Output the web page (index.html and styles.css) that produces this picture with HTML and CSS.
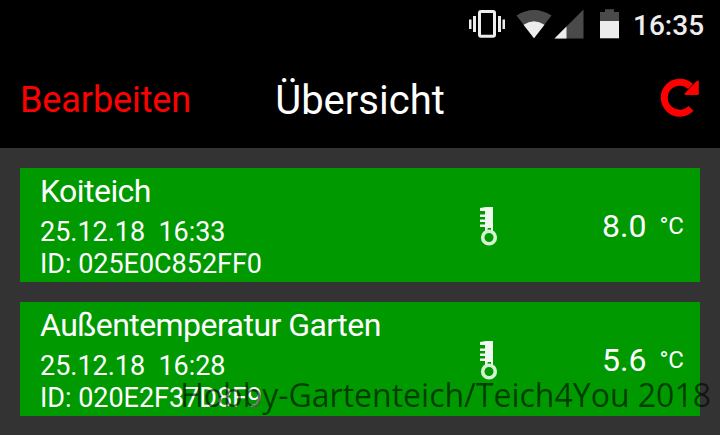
FILE: index.html
```html
<!DOCTYPE html>
<html lang="de">
<head>
    <meta charset="UTF-8">
    <meta name="viewport" content="width=device-width, initial-scale=1.0">
    <title>Übersicht</title>
    <link rel="stylesheet" href="styles.css">
</head>
<body>
    <div class="statusbar">
        <svg class="status-icons" width="160" height="48" viewBox="464 0 160 48">
            <!-- Vibration -->
            <rect x="479.5" y="11.5" width="15" height="24.8" rx="1.5" fill="none" stroke="#ededed" stroke-width="3"/>
            <path fill="#ededed" d="M469 19.500h2.500v9.500H469zM473 16h3v16h-3zM498 16h3v16h-3zM502.500 19.500h2.500v9.500h-2.500z"/>
            <!-- WLAN -->
            <path fill="#4a4a4a" d="M516.500 15.500Q534 4.500 551.500 15.500L534 38.300z"/>
            <path fill="#ededed" d="M523.500 24.700Q534 17.600 544.500 24.700L534 38.300z"/>
            <!-- Mobilfunk -->
            <path fill="#4a4a4a" d="M583.500 9.500v29h-29z"/>
            <path fill="#ededed" d="M566.500 26.500v12h-12z"/>
            <!-- Akku -->
            <path fill="#4a4a4a" d="M605 9.300h9v2.700h5v9h-19v-9h5z"/>
            <path fill="#ededed" d="M600 21h19v17.300h-19z"/>
        </svg>
        <span class="clock">16:35</span>
    </div>

    <div class="header">
        <a class="edit">Bearbeiten</a>
        <h1>Übersicht</h1>
        <svg class="refresh" width="44" height="44" viewBox="658 76 44 44">
            <path fill="none" stroke="#ff0000" stroke-width="7" d="M691 108.300A15.500 15.500 0 1 1 690.500 86.500"/>
            <path fill="#ff0000" d="M697 80.800q1.800-1 1.800 1V93.500q0 1.500-1.500 1.500H686q-2.500-.300-1-2z"/>
        </svg>
    </div>

    <div class="list">
        <div class="sensor">
            <div class="info">
                <h2>Koiteich</h2>
                <p>25.12.18&nbsp; 16:33</p>
                <p>ID: 025E0C852FF0</p>
            </div>
            <svg class="thermo" width="24" height="44" viewBox="0 0 24 44">
                <path fill="#eefaee" d="M12 4h7v22h-2v-1h-3.500v1H11v-2H6v-2.500h5V19H6v-2.500h5V14H6v-2.500h5V8H6V5z"/>
                <path fill="#eefaee" d="M11 25h2.500v5H11zM17 25h2v5h-2z"/>
                <circle cx="15" cy="34.500" r="6.300" fill="none" stroke="#d5f1d5" stroke-width="3.600"/>
            </svg>
            <div class="value">8.0 <span>°C</span></div>
        </div>

        <div class="sensor">
            <div class="info">
                <h2>Außentemperatur Garten</h2>
                <p>25.12.18&nbsp; 16:28</p>
                <p>ID: 020E2F37D8F9</p>
            </div>
            <svg class="thermo" width="24" height="44" viewBox="0 0 24 44">
                <path fill="#eefaee" d="M12 4h7v22h-2v-1h-3.500v1H11v-2H6v-2.500h5V19H6v-2.500h5V14H6v-2.500h5V8H6V5z"/>
                <path fill="#eefaee" d="M11 25h2.500v5H11zM17 25h2v5h-2z"/>
                <circle cx="15" cy="34.500" r="6.300" fill="none" stroke="#d5f1d5" stroke-width="3.600"/>
            </svg>
            <div class="value">5.6 <span>°C</span></div>
        </div>
    </div>

    <div class="watermark">Hobby-Gartenteich/Teich4You 2018</div>
</body>
</html>
```

FILE: styles.css
```css
* {
    box-sizing: border-box;
}
body {
    margin: 0;
    height: 435px;
    overflow: hidden;
    position: relative;
    background-color: #333333;
    color: white;
    font-family: Roboto, sans-serif;
}
h1, h2, p {
    margin: 0;
    font-weight: 400;
}
.statusbar {
    height: 48px;
    padding-right: 16px;
    display: flex;
    justify-content: flex-end;
    background-color: #000;
}
.status-icons {
    flex: none;
    margin-right: 9px;
}
.clock {
    width: 71px;
    font-size: 28px;
    font-weight: 500;
    line-height: 52px;
    color: #ededed;
}
.header {
    height: 100px;
    padding: 0 18px 0 20px;
    display: grid;
    grid-template-columns: 1fr auto 1fr;
    align-items: center;
    background-color: #000;
}
.edit {
    font-size: 36px;
    line-height: 48px;
    letter-spacing: -0.1px;
    padding-top: 4px;
    color: #f00;
}
.header h1 {
    font-size: 40px;
    line-height: 48px;
    padding: 5px 2px 0 0;
}
.refresh {
    justify-self: end;
}
.list {
    padding: 20px;
    display: flex;
    flex-direction: column;
    gap: 20px;
}
.sensor {
    height: 114px;
    padding: 0 16px 0 20px;
    display: flex;
    align-items: center;
    background-color: #009900;
}
.info {
    width: 434px;
    align-self: flex-start;
    white-space: nowrap;
}
.info h2 {
    font-size: 32px;
    letter-spacing: -0.55px;
    line-height: 46px;
    height: 48px;
}
.info p {
    font-size: 27px;
    line-height: 32px;
    letter-spacing: -0.03px;
}
.thermo {
    flex: none;
}
.value {
    flex: 1;
    padding-top: 2px;
    font-size: 32px;
    text-align: right;
}
.value span {
    font-size: 24px;
    position: relative;
    top: -3px;
    margin-left: 5px;
}
.watermark {
    position: absolute;
    right: 9px;
    bottom: 18px;
    font-family: "Open Sans", sans-serif;
    font-size: 32px;
    line-height: 44px;
    white-space: nowrap;
    color: rgba(0, 0, 0, 0.6);
}
```
